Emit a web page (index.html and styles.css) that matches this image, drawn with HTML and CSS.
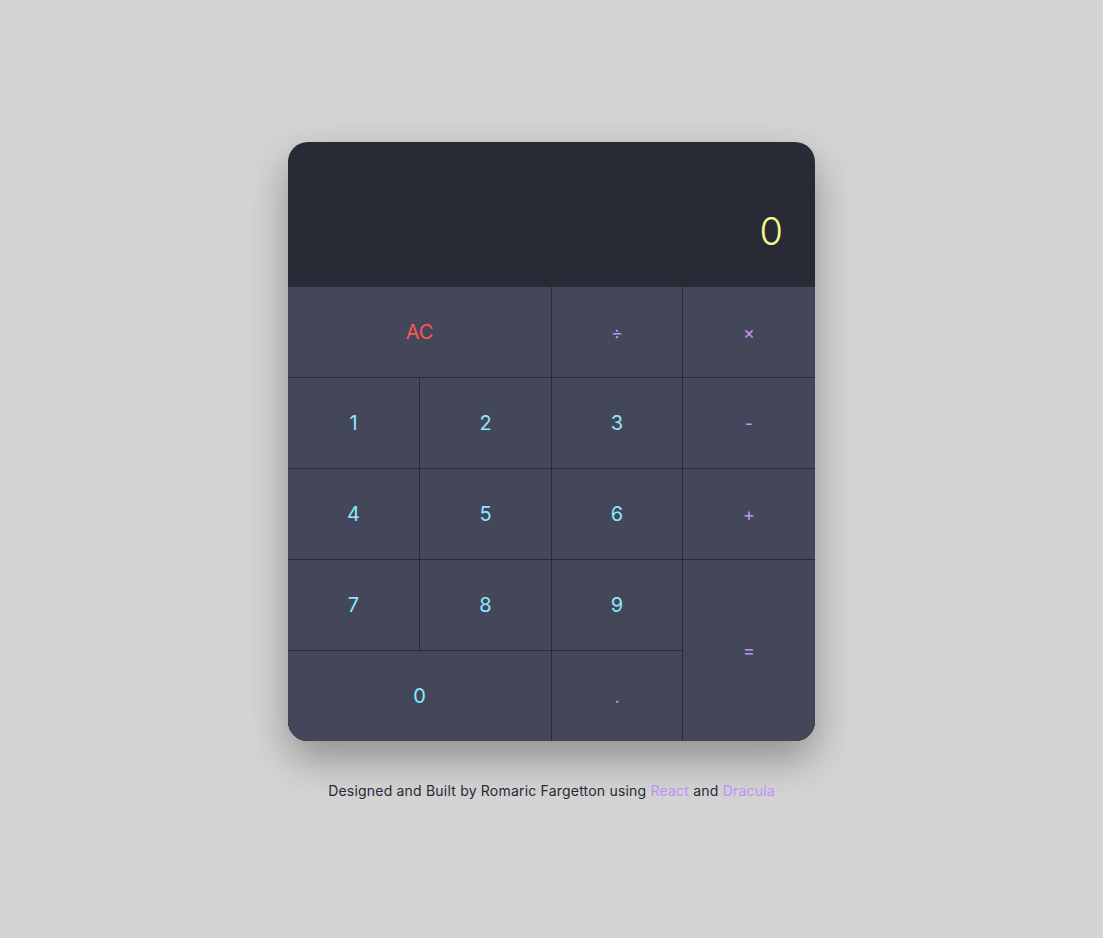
FILE: index.html
```html
<!DOCTYPE html>
<html lang="en">
<head>
<meta charset="utf-8">
<title>Calculator</title>
<link rel="stylesheet" href="styles.css">
</head>
<body>
<main class="page">
  <div class="calculator">
    <div class="display"><span class="value">0</span></div>
    <div class="keys">
      <button class="key span2 clear">AC</button>
      <button class="key op">÷</button>
      <button class="key op">×</button>
      <button class="key num">1</button>
      <button class="key num">2</button>
      <button class="key num">3</button>
      <button class="key op">-</button>
      <button class="key num">4</button>
      <button class="key num">5</button>
      <button class="key num">6</button>
      <button class="key op">+</button>
      <button class="key num">7</button>
      <button class="key num">8</button>
      <button class="key num">9</button>
      <button class="key op tall">=</button>
      <button class="key num span2">0</button>
      <button class="key op dot">.</button>
    </div>
  </div>
  <p class="credits">Designed and Built by Romaric Fargetton using <a href="#">React</a> and <a href="#">Dracula</a></p>
</main>
</body>
</html>
```

FILE: styles.css
```css
html, body {
  margin: 0;
  padding: 0;
  height: 100%;
}
body {
  background: #d4d4d4;
  font-family: Inter, "Noto Sans", sans-serif;
}
.page {
  height: 100%;
  display: flex;
  flex-direction: column;
  align-items: center;
  justify-content: flex-start;
  padding-top: 142px;
  box-sizing: border-box;
}
.calculator {
  width: 527px;
  border-radius: 20px;
  overflow: hidden;
  background: #282a36;
  box-shadow: 0 18px 40px rgba(0, 0, 0, 0.32);
}
.display {
  height: 145px;
  display: flex;
  align-items: center;
  justify-content: flex-end;
  padding: 32px 32px 0 32px;
  box-sizing: border-box;
}
.value {
  color: #f1fa8c;
  font-size: 38px;
  font-weight: 300;
}
.keys {
  display: grid;
  grid-template-columns: 131px 131px 130px 1fr;
  grid-template-rows: repeat(5, 90px);
  gap: 1px;
  background: #282a36;
}
.key {
  border: none;
  margin: 0;
  padding: 0;
  background: #44475a;
  font-family: Inter, "Noto Sans", sans-serif;
  font-size: 20px;
  display: flex;
  align-items: center;
  justify-content: center;
}
.span2 { grid-column: span 2; }
.tall { grid-row: span 2; }
.num { color: #8be9fd; }
.op { color: #bd93f9; font-size: 18px; }
.clear { color: #ff5555; }
.credits {
  margin: 41px 0 0;
  font-size: 14px;
  letter-spacing: 0.2px;
  color: #282a36;
}
.credits a {
  color: #bd93f9;
  text-decoration: none;
}
```
